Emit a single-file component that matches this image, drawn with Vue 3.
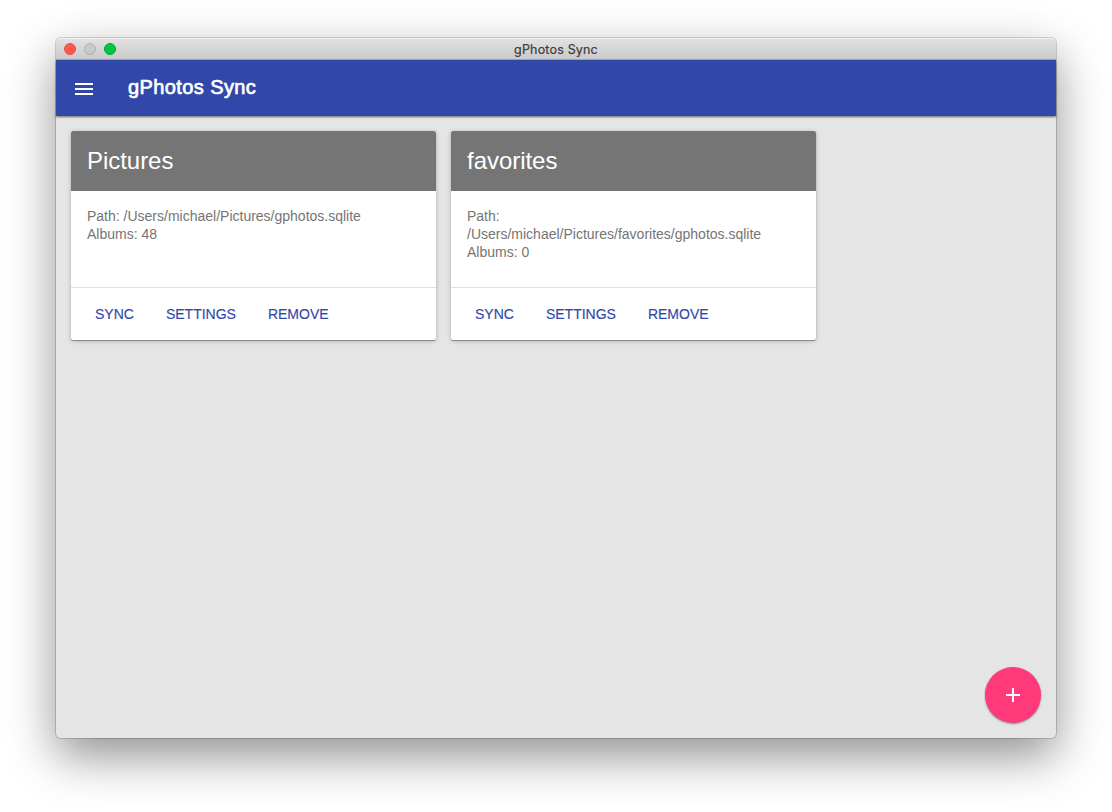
<script setup>
const cards = [
  { name: 'Pictures', path: '/Users/michael/Pictures/gphotos.sqlite', albums: 48 },
  { name: 'favorites', path: '/Users/michael/Pictures/favorites/gphotos.sqlite', albums: 0 },
]
const actions = ['SYNC', 'SETTINGS', 'REMOVE']
</script>

<template>
  <div class="desktop">
    <div class="window">
      <div class="titlebar">
        <div class="lights"><i class="close"></i><i class="min"></i><i class="max"></i></div>
        <span class="wtitle">gPhotos Sync</span>
      </div>
      <header class="appbar">
        <svg class="menu" viewBox="0 0 24 24"><path fill="#fff" d="M3 18h18v-2H3v2zm0-5h18v-2H3v2zm0-7v2h18V6H3z" /></svg>
        <h1>gPhotos Sync</h1>
      </header>
      <main>
        <section v-for="c in cards" :key="c.name" class="card">
          <h2>{{ c.name }}</h2>
          <div class="body">Path: {{ c.path }}<br />Albums: {{ c.albums }}</div>
          <div class="actions"><button v-for="a in actions" :key="a">{{ a }}</button></div>
        </section>
      </main>
      <button class="fab"><svg viewBox="0 0 24 24"><path fill="#fff" d="M19 13h-6v6h-2v-6H5v-2h6V5h2v6h6v2z" /></svg></button>
    </div>
  </div>
</template>

<style>
body { background: #fff; overflow: hidden; }
</style>

<style scoped>
.desktop { box-sizing: border-box; width: 1112px; height: 812px; padding: 38px 56px 0; overflow: hidden; background: #fff; font-family: "Liberation Sans", Arial, sans-serif; }
.window { position: relative; display: flex; flex-direction: column; width: 1000px; height: 700px; border-radius: 5px; background: #e5e5e5; box-shadow: 0 0 0 1px rgba(0,0,0,.16), 0 18px 48px rgba(0,0,0,.44); }
.titlebar { position: relative; box-sizing: border-box; display: flex; align-items: center; justify-content: center; height: 22px; border-radius: 5px 5px 0 0; background: linear-gradient(#e1e1e1, #cacaca); border-top: 1px solid #f2f2f2; border-bottom: 1px solid #a9a9a9; }
.lights { position: absolute; left: 8px; top: 4px; display: flex; gap: 8px; }
.lights i { box-sizing: border-box; width: 12px; height: 12px; border-radius: 50%; border: 1px solid; }
.close { background: #ff5650; border-color: #e8504a !important; }
.min { background: #c9c9c9; border-color: #b0b0b0 !important; }
.max { background: #00c543; border-color: #00a935 !important; }
.wtitle { padding-top: 2px; font: 12.5px/20px Inter, sans-serif; letter-spacing: .18px; color: #3c3c3c; -webkit-text-stroke: .2px #3c3c3c; }
.appbar { position: relative; display: flex; align-items: center; height: 56px; flex: none; background: #3148a8; box-shadow: 0 1px 2px rgba(0,0,0,.55); }
.menu { width: 24px; height: 24px; margin: 2px 32px 0 16px; }
h1 { margin: 0 0 2px; font-size: 20px; line-height: 28px; font-weight: 400; letter-spacing: .4px; color: #fff; -webkit-text-stroke: .7px #fff; }
main { display: flex; gap: 15px; padding: 15px; }
.card { width: 365px; height: 209px; display: flex; flex-direction: column; background: #fff; border-radius: 2px; overflow: hidden; box-shadow: 0 1px 5px rgba(0,0,0,.2), 0 1px 1px rgba(0,0,0,.34); }
h2 { box-sizing: border-box; margin: 0; height: 60px; padding: 14px 16px; font-size: 24px; line-height: 32px; font-weight: 400; letter-spacing: -.04px; color: #fff; background: #757575; }
.body { flex: 1; box-sizing: border-box; width: 90%; padding: 16px 0 16px 16px; font-size: 14px; line-height: 18px; color: #757575; }
.actions { box-sizing: border-box; height: 53px; padding: 8px; border-top: 1px solid #e0e0e0; display: flex; }
.actions button { border: 0; margin: 0; padding: 0 16px; height: 36px; background: none; font: 14px/36px "Liberation Sans", Arial, sans-serif; color: #3148a8; -webkit-text-stroke: .15px #3148a8; }
.fab { position: absolute; right: 15px; bottom: 15px; width: 56px; height: 56px; padding: 0; border: 0; border-radius: 50%; background: #ff397a; box-shadow: 0 1px 2px rgba(0,0,0,.4); display: flex; align-items: center; justify-content: center; }
.fab svg { width: 24px; height: 24px; }
</style>
